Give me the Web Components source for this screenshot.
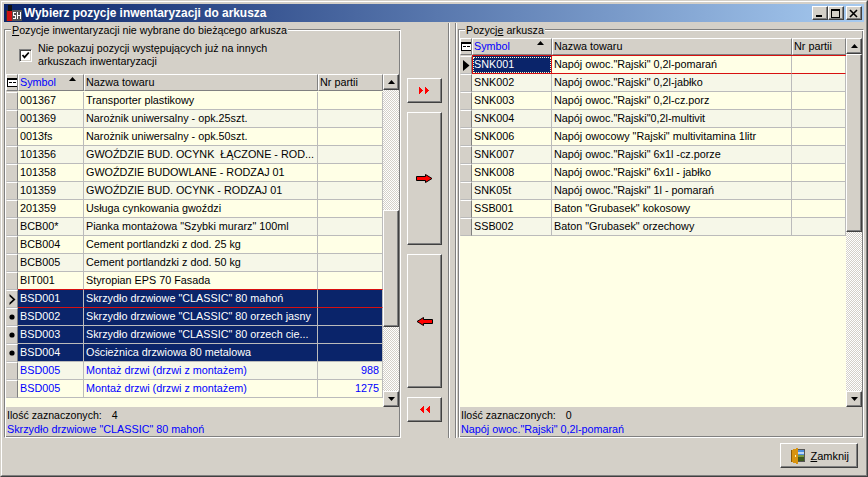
<!DOCTYPE html>
<html lang="pl"><head><meta charset="utf-8">
<style>
html,body{margin:0;padding:0;background:#d4d0c8}
body{width:868px;height:477px;overflow:hidden;font:10.8px "Liberation Sans",Arial,sans-serif;color:#000}
</style></head><body>
<wb-window heading="Wybierz pozycje inwentaryzacji do arkusza">
  <wb-group legend-html="Pozycje inwentaryzacji nie wybrane do bieżącego arkusza" style="width:397px">
    <wb-check>Nie pokazuj pozycji występujących już na innych<br>arkuszach inwentaryzacji</wb-check>
    <wb-grid id="g1" cols="66 234 65" height="333" thumb="120,117" sum="4" info='Skrzydło drzwiowe "CLASSIC" 80 mahoń'></wb-grid>
  </wb-group>
  <wb-movebar></wb-movebar>
  <wb-split></wb-split>
  <wb-group legend-html="Pozycje arkusza" style="width:406px">
    <wb-grid id="g2" cols="80 240 54" height="369" thumb="0,178" sum="0" info='Napój owoc."Rajski" 0,2l-pomarań' style="margin-top:2px"></wb-grid>
  </wb-group>
</wb-window>
<script>
const S='"Liberation Sans",Arial,sans-serif';
class WbWindow extends HTMLElement{connectedCallback(){if(this.shadowRoot)return;const s=this.attachShadow({mode:'open'});
s.innerHTML=`<style>
:host{display:flex;flex-direction:column;box-sizing:border-box;width:868px;height:477px;background:#d4d0c8;border:1px solid;border-color:#d4d0c8 #404040 #404040 #d4d0c8;}
.in{flex:1;display:flex;flex-direction:column;border:1px solid;border-color:#fff #808080 #808080 #fff;padding:2px;min-height:0}
.tb{height:18px;display:flex;align-items:center;background:linear-gradient(90deg,#0a246a,#a6caf0);color:#fff;font:bold 11.9px ${S};padding:0 2px;gap:2px;flex:none}
.tt{flex:1;white-space:nowrap}
.wb{width:16px;height:14px;box-sizing:border-box;background:#d4d0c8;border:1px solid;border-color:#fff #404040 #404040 #fff;box-shadow:inset -1px -1px 0 #808080;display:flex;align-items:center;justify-content:center}
.wbs{display:flex}.wb:last-child{margin-left:2px}
.body{height:416px;display:flex;flex:none}
.foot{flex:1;display:flex;justify-content:flex-end;align-items:flex-start;padding:5px 6px 0 0}
</style>
<div class="in">
<div class="tb"><svg width="16" height="16" viewBox="0 0 16 16" shape-rendering="crispEdges"><rect x="0" y="5" width="16" height="11" fill="#333"/><rect x="2" y="0" width="4" height="6" fill="#111"/><rect x="1" y="6" width="6" height="10" fill="#c11"/><rect x="6" y="5" width="10" height="11" fill="#555"/><path d="M7 7h3v1H8v2h2v4H7v-1h2v-2H7zM11 7h1v3h2V7h1v7h-1v-3h-2v3h-1z" fill="#fff"/></svg>
<span class="tt"></span><span class="wbs">
<span class="wb"><svg width="10" height="9" shape-rendering="crispEdges"><rect x="1" y="6" width="6" height="2"/></svg></span>
<span class="wb"><svg width="10" height="9" shape-rendering="crispEdges"><path d="M0 0h9v9H0zM1 2v6h7V2z" fill-rule="evenodd"/></svg></span>
<span class="wb"><svg width="10" height="9"><path d="M1 1l7 7M8 1l-7 7" stroke="#000" stroke-width="1.6"/></svg></span></span></div>
<div class="body"><slot></slot></div>
<div class="foot"><wb-button></wb-button></div>
</div>`;
s.querySelector('.tt').textContent=this.getAttribute('heading');}}
customElements.define('wb-window',WbWindow);

class WbGroup extends HTMLElement{connectedCallback(){if(this.shadowRoot)return;const s=this.attachShadow({mode:'open'});
const l=this.getAttribute('legend-html');const u=l==='Pozycje arkusza'?'Pozycj<u>e</u> arkusza':'<u>P</u>'+l.slice(1);
s.innerHTML=`<style>
:host{display:block;box-sizing:border-box;flex:none}
fieldset{margin:0;height:416px;box-sizing:border-box;padding:0;border:1px solid;border-color:#808080 #fff #fff #808080;box-shadow:inset 1px 1px 0 #fff,inset -1px -1px 0 #808080;min-width:0;display:flex;flex-direction:column;background:#d4d0c8}
legend{padding:0 1px;margin-left:6px;background:#d4d0c8;font:10.7px/16px ${S};height:14px;white-space:nowrap}
</style><fieldset><legend>${u}</legend><slot></slot></fieldset>`;}}
customElements.define('wb-group',WbGroup);

class WbCheck extends HTMLElement{connectedCallback(){if(this.shadowRoot)return;const s=this.attachShadow({mode:'open'});
s.innerHTML=`<style>
:host{display:flex;align-items:center;gap:6px;height:38px;box-sizing:border-box;padding:0 0 0 14px;font:10.7px/13px ${S};flex:none}
.b{width:13px;height:13px;box-sizing:border-box;background:#fff;border:1px solid;border-color:#808080 #fff #fff #808080;box-shadow:inset 1px 1px 0 #404040,inset -1px -1px 0 #d4d0c8;display:flex;align-items:center;justify-content:center;flex:none}
</style><span class="b"><svg width="9" height="9" viewBox="0 0 9 9"><path d="M1.5 4l2 2.3L7.8 1.5" fill="none" stroke="#000" stroke-width="1.8"/></svg></span><span><slot></slot></span>`;}}
customElements.define('wb-check',WbCheck);

const DATA={g1:{gap:0,rows:[
['001367','Transporter plastikowy',''],['001369','Narożnik uniwersalny - opk.25szt.',''],['0013fs','Narożnik uniwersalny - opk.50szt.',''],
['101356','GWOŹDZIE BUD. OCYNK  ŁĄCZONE - ROD...',''],['101358','GWOŹDZIE BUDOWLANE - RODZAJ 01',''],['101359','GWOŹDZIE BUD. OCYNK - RODZAJ 01',''],
['201359','Usługa cynkowania gwoździ',''],['BCB00*','Pianka montażowa "Szybki murarz" 100ml',''],['BCB004','Cement portlandzki z dod. 25 kg',''],
['BCB005','Cement portlandzki z dod. 50 kg',''],['BIT001','Styropian EPS 70 Fasada','','pr'],
['BSD001','Skrzydło drzwiowe "CLASSIC" 80 mahoń','','s cu','cur'],['BSD002','Skrzydło drzwiowe "CLASSIC" 80 orzech jasny','','s','dot'],
['BSD003','Skrzydło drzwiowe "CLASSIC" 80 orzech cie...','','s','dot'],['BSD004','Ościeżnica drzwiowa 80 metalowa','','s','dot'],
['BSD005','Montaż drzwi (drzwi z montażem)','988','b'],['BSD005','Montaż drzwi (drzwi z montażem)','1275','b']]},
g2:{gap:1,rows:[['SNK001','Napój owoc."Rajski" 0,2l-pomarań','','f','arrow'],['SNK002','Napój owoc."Rajski" 0,2l-jabłko',''],['SNK003','Napój owoc."Rajski" 0,2l-cz.porz',''],
['SNK004','Napój owoc."Rajski"0,2l-multivit',''],['SNK006','Napój owocowy "Rajski" multivitamina 1litr',''],['SNK007','Napój owoc."Rajski" 6x1l -cz.porze',''],
['SNK008','Napój owoc."Rajski" 6x1l - jabłko',''],['SNK05t','Napój owoc."Rajski" 1l - pomarań',''],['SSB001','Baton "Grubasek" kokosowy',''],['SSB002','Baton "Grubasek" orzechowy','']]}};

class WbGrid extends HTMLElement{connectedCallback(){if(this.shadowRoot)return;const s=this.attachShadow({mode:'open'});
const c=this.getAttribute('cols').split(' ').map(Number),h=+this.getAttribute('height');
const [tt,th]=this.getAttribute('thumb').split(',').map(Number);
const d=DATA[this.id];
const tpl=`12px ${c[0]}px ${c[1]}px ${c[2]}px`;
const ind={cur:'<svg width="7" height="11" viewBox="0 0 7 11"><path d="M0.500 0l6 5.500-6 5.500V8.800l3.500-3.300L0.500 2.200z" fill="#000"/></svg>',
dot:'<svg width="6" height="6"><circle cx="3" cy="3" r="2.600"/></svg>',arrow:'<svg width="7" height="11"><path d="M0 0l6.500 5.500L0 11z"/></svg>'};
const rows=d.rows.map((r,i)=>{const cl=r[3]||'',m=r[4]||'';const alt=i%2===1?'a':'';
return `<div class="row ${alt} ${cl}"><div class="ind">${m?ind[m]:''}</div><div class="c">${r[0]}</div><div class="c">${r[1]}</div><div class="c r">${r[2]}</div></div>`}).join('');
s.innerHTML=`<style>
:host{display:block;flex:none;font:10.8px ${S};margin:0 1px}
.g{display:grid;grid-template-columns:1fr 16px;height:${h}px;background:#d4d0c8}
.tbl{background:#ffffe6;overflow:hidden;min-width:0}
.row,.hd{display:grid;grid-template-columns:${tpl}}
.hd{height:17px;background:#d4d0c8;box-sizing:border-box}
.hd>div{box-sizing:border-box;border-right:1px solid #808080;border-bottom:1px solid #808080;border-top:1px solid #fff;border-left:1px solid #fff;padding:0 0 0 1px;line-height:15px;position:relative;white-space:nowrap;overflow:hidden}
.hd .sym{color:#00f}
.hd .hi{padding:0;display:flex;align-items:center;justify-content:center}
.tri{position:absolute;right:7px;top:2px}
.gap{height:1px;background:linear-gradient(90deg,#d4d0c8 12px,#ffffe6 12px)}
.gap.red{background:linear-gradient(90deg,#d4d0c8 12px,#d81010 12px)}
.row{height:18px;box-sizing:border-box;background:#ffffe6}
.row.a{background:#f6f7e8}
.c{box-sizing:border-box;border-right:1px solid #bbb;border-bottom:1px solid #bbb;padding:0 0 0 2px;line-height:17px;white-space:pre;overflow:hidden}
.c.r{text-align:right;padding:0 3px 0 0}
.ind{box-sizing:border-box;background:#d4d0c8;border:1px solid;border-color:#fff #808080 #bbb #d4d0c8;display:flex;align-items:center;justify-content:center}
.row.pr .c{border-bottom-color:#d81010}
.row.s .c{background:#0a246a;color:#fff}
.row.cu .c{border-bottom-color:#d81010}
.row.b .c{color:#00f}
.row.f .c{border-bottom-color:#d81010}
.row.f .c:nth-child(2){background:#0a246a;color:#fff;outline:1px dotted #ffc;outline-offset:-2px;border-left:1px solid #d81010;border-right:1px solid #d81010;padding-left:1px}
.sb{display:flex;flex-direction:column;background:repeating-conic-gradient(#d4d0c8 0 25%,#fff 0 50%) 0 0/2px 2px}
.ar{height:16px;flex:none;box-sizing:border-box;background:#d4d0c8;border:1px solid;border-color:#fff #404040 #404040 #fff;box-shadow:inset -1px -1px 0 #808080;display:flex;align-items:center;justify-content:center}
.tr{flex:1;min-height:0;display:flex;flex-direction:column}
.sp{height:${tt}px;flex:none}
.th{height:${th}px;flex:none;box-sizing:border-box;background:#d4d0c8;border:1px solid;border-color:#fff #404040 #404040 #fff;box-shadow:inset -1px -1px 0 #808080}
.st{height:29px;font:10.8px/14px ${S};padding:1px 0 0 1px;flex:none;box-sizing:border-box}
.st .l{font-size:10.6px}
.st .v{margin-left:10px}
.st .i{color:#00f;white-space:nowrap}
</style>
<div class="g"><div class="tbl"><div class="hd"><div class="hi"><svg width="11" height="9" shape-rendering="crispEdges"><rect width="11" height="9" fill="#fff"/><path d="M0 0h11v9H0zM1 2v6h9V2z" fill-rule="evenodd"/><rect x="2" y="4" width="3" height="1"/><rect x="6" y="4" width="3" height="1"/></svg></div><div class="sym">Symbol<svg class="tri" width="7" height="4"><path d="M3.500 0L7 4H0z"/></svg></div><div>Nazwa towaru</div><div>Nr partii</div></div><div class="gap ${d.gap?'red':''}"></div>${rows}</div>
<div class="sb"><div class="ar"><svg width="7" height="4"><path d="M3.500 0L7 4H0z"/></svg></div><div class="tr"><div class="sp"></div><div class="th"></div></div><div class="ar"><svg width="7" height="4"><path d="M0 0h7L3.500 4z"/></svg></div></div></div>
<div class="st"><div class="l">Ilość zaznaczonych:<span class="v">${this.getAttribute('sum')}</span></div><div class="i"></div></div>`;
s.querySelector('.i').textContent=this.getAttribute('info');}}
customElements.define('wb-grid',WbGrid);

class WbMovebar extends HTMLElement{connectedCallback(){if(this.shadowRoot)return;const s=this.attachShadow({mode:'open'});
const dbl=f=>`<svg width="11" height="7" viewBox="0 0 11 7" shape-rendering="crispEdges" style="${f?'transform:scaleX(-1)':''}"><path d="M0 0h1v1h1v1h1v1h1v1h-1v1h-1v1h-1v1H0zM6 0h1v1h1v1h1v1h1v1h-1v1H8v1H7v1H6z" fill="#f00"/></svg>`;
const arr=f=>`<svg width="17" height="9" viewBox="0 0 17 9" style="${f?'transform:scaleX(-1)':''}"><path d="M.5 2.500h9v-2L16 4.500l-6.500 4v-2h-9z" fill="#f00" stroke="#000"/></svg>`;
s.innerHTML=`<style>
:host{display:flex;flex-direction:column;width:35px;margin:56px 0 0 6px;gap:9px;flex:none}
button{all:unset;box-sizing:border-box;width:35px;background:#d4d0c8;border:1px solid;border-color:#fff #404040 #404040 #fff;box-shadow:inset -1px -1px 0 #808080;display:flex;align-items:center;justify-content:center}
.s{height:25px}.l{height:133px}.l2{height:134px}
</style><button class="s" aria-label="all right">${dbl(0)}</button><button class="l" aria-label="right">${arr(0)}</button><button class="l2" aria-label="left">${arr(1)}</button><button class="s" aria-label="all left">${dbl(1)}</button>`;}}
customElements.define('wb-movebar',WbMovebar);

class WbSplit extends HTMLElement{connectedCallback(){if(this.shadowRoot)return;this.attachShadow({mode:'open'}).innerHTML=`<style>
:host{display:block;flex:none;width:9px;margin:1px 1px 0 6px;height:415px;background:linear-gradient(90deg,#808080 0 1px,#fff 1px 2px,#d4d0c8 2px 7px,#808080 7px 8px,#fff 8px)}
</style>`;}}
customElements.define('wb-split',WbSplit);

class WbButton extends HTMLElement{connectedCallback(){if(this.shadowRoot)return;this.attachShadow({mode:'open'}).innerHTML=`<style>
:host{display:block;flex:none}
button{all:unset;box-sizing:border-box;width:78px;height:25px;background:#d4d0c8;border:1px solid;border-color:#fff #404040 #404040 #fff;box-shadow:inset -1px -1px 0 #808080;display:flex;align-items:center;justify-content:flex-end;gap:5px;padding-right:8px;font:11px ${S};color:#000}
</style><button><svg width="14" height="16" viewBox="0 0 14 16" shape-rendering="crispEdges"><rect x="5" y="1" width="9" height="13" fill="#555"/><rect x="7" y="2" width="6" height="5" fill="#4d8fe0"/><rect x="7" y="4" width="6" height="2" fill="#bcd7f5"/><rect x="7" y="7" width="6" height="2" fill="#7c9a46"/><rect x="7" y="9" width="6" height="4" fill="#3f5a1e"/><path d="M0 2l7-2v16l-7-2z" fill="#d8930f"/><rect x="0" y="2" width="1" height="12" fill="#8a5a08"/><rect x="4" y="7" width="1" height="2" fill="#fff3b0"/></svg><span><u>Z</u>amknij</span></button>`;}}
customElements.define('wb-button',WbButton);
</script>
</body></html>
